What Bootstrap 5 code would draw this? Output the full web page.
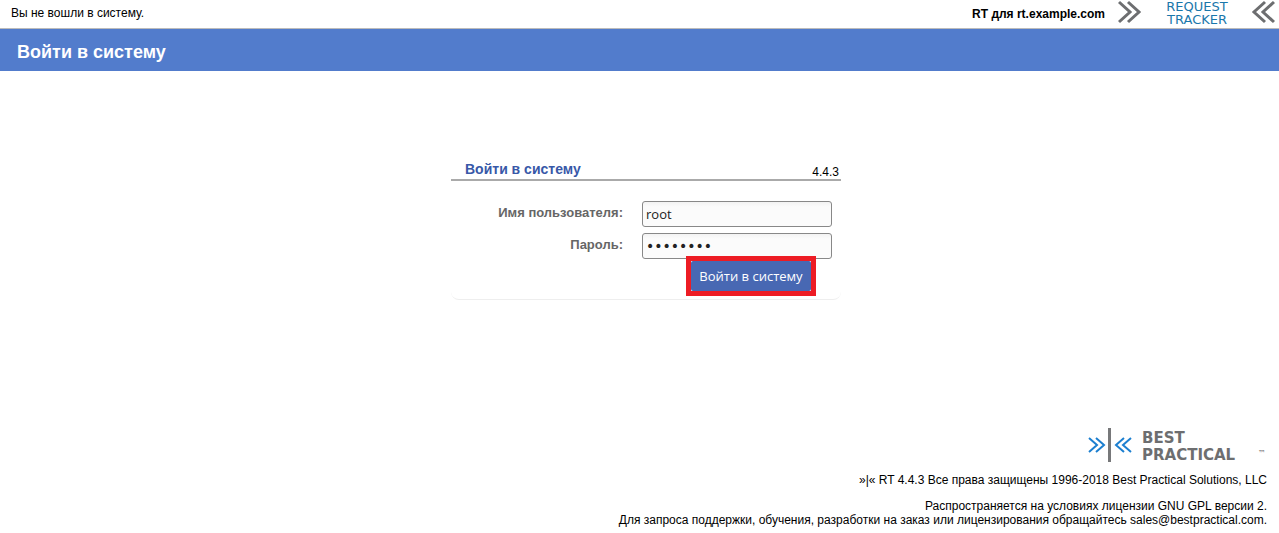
<!DOCTYPE html>
<html lang="ru">
<head>
<meta charset="utf-8">
<meta name="viewport" content="width=device-width, initial-scale=1">
<title>Войти в систему</title>
<link rel="stylesheet" href="https://cdn.jsdelivr.net/npm/bootstrap@5.3.0/dist/css/bootstrap.min.css">
<style>
  body { font-family: "Liberation Sans", Arial, sans-serif; font-size: 12px; line-height: 14px; color: #000; background: #fff; }
  .topbar { height: 29px; border-bottom: 1px solid #bbb; padding: 0 4px 0 11px; }
  .topbar-text { padding-top: 6px; }
  .site-name { margin-right: 13px; padding-top: 7px; }
  .page-title { height: 42px; padding: 4px 17px 0; background: #527ccc; color: #fff; }
  .page-title h1 { font-size: 18px; line-height: 24px; }
  .login-area { padding: 88px 0 0 13px; }
  .login-box { width: 390px; max-width: 100%; height: 141px; border-bottom: 1px solid #eee; border-radius: 0 0 8px 8px; }
  .login-head { height: 22px; border-bottom: 2px solid #aaa; padding: 2px 2px 0 14px; }
  .login-head h2 { font-size: 14px; line-height: 17px; color: #3858a8; }
  .login-head span { padding-top: 4px; }
  .fields { padding: 20px 9px 0 0; gap: 6px; }
  .field-row { gap: 19px; }
  .field-row label { font-size: 13px; line-height: 24px; color: #666; font-weight: bold; }
  .login-box .entry { width: 190px; height: 26px; padding: 0 3px; border: 1px solid #888; border-radius: 3px; background: linear-gradient(#f3f3f3, #fbfbfb 5px); font-family: "Open Sans", sans-serif; font-size: 13px; color: #222; }
  .login-box .entry[type="password"] { font-family: "DejaVu Sans", sans-serif; font-size: 14px; }
  .submit-row { padding: 2px 30px 0 0; }
  .marked { outline: 5px solid #ed1c24; background: #fff; position: relative; }
  .login-btn { width: 120px; height: 30px; padding: 1px 0 0; border: 0; border-radius: 2px; background: #4868b3; color: #fff; font-family: "Open Sans", sans-serif; font-size: 13px; }
  .login-btn:hover { background: #3d5ca6; color: #fff; }
  .page-foot { padding: 128px 12px 6px; }
  .page-foot a { color: inherit; text-decoration: none; }
  .page-foot svg { overflow: visible; }
  .wordmark { font-family: "DejaVu Sans", sans-serif; }
</style>
</head>
<body>
<header>
  <div class="topbar d-flex justify-content-between align-items-start">
    <span class="topbar-text">Вы не вошли в систему.</span>
    <div class="d-flex align-items-start">
      <strong class="site-name">RT для rt.example.com</strong>
      <svg width="157" height="28" viewBox="0 0 157 28" role="img" aria-label="Request Tracker">
        <g fill="none" stroke="#6d6e70" stroke-width="3">
          <path d="M1 2 12 12 1 22M10 2 21 12 10 22M147 2 136 12 147 22M156 2 145 12 156 22"/>
        </g>
        <g class="wordmark" fill="#1a77ab" font-size="13" text-anchor="middle">
          <text x="79" y="11">REQUEST</text>
          <text x="79" y="24">TRACKER</text>
        </g>
      </svg>
    </div>
  </div>
  <div class="page-title d-flex align-items-center"><h1 class="fw-bold m-0">Войти в систему</h1></div>
</header>

<main class="login-area d-flex justify-content-center">
  <form class="login-box" onsubmit="return false">
    <div class="login-head d-flex justify-content-between align-items-start">
      <h2 class="fw-bold m-0">Войти в систему</h2>
      <span>4.4.3</span>
    </div>
    <div class="fields d-flex flex-column">
      <div class="field-row d-flex justify-content-end">
        <label for="user">Имя пользователя:</label>
        <input class="entry form-control" id="user" type="text" value="root">
      </div>
      <div class="field-row d-flex justify-content-end">
        <label for="pass">Пароль:</label>
        <input class="entry form-control" id="pass" type="password" value="password">
      </div>
    </div>
    <div class="submit-row d-flex justify-content-end">
      <div class="marked d-flex"><button class="btn login-btn" type="submit">Войти в систему</button></div>
    </div>
  </form>
</main>

<footer class="page-foot text-end">
  <a href="#" class="d-inline-block" aria-label="Best Practical">
    <svg class="d-block" width="179" height="34" viewBox="0 0 179 34">
      <g fill="none" stroke="#1c7fd0" stroke-width="2">
        <path d="M1 10 9 17 1 24M8 10 16 17 8 24M36 10 28 17 36 24M43 10 35 17 43 24"/>
      </g>
      <path d="M21.500 0V34" stroke="#77787a" stroke-width="3"/>
      <g class="wordmark" fill="#6d6e70" font-size="15" font-weight="bold">
        <text x="54" y="15">BEST</text>
        <text x="54" y="32">PRACTICAL</text>
        <text x="170" y="28" font-size="8" font-weight="normal">™</text>
      </g>
    </svg>
  </a>
  <p class="m-0 pt-2">»|« RT 4.4.3 Все права защищены 1996-2018 Best Practical Solutions, LLC</p>
  <p class="m-0 pt-2 mt-1">Распространяется на условиях лицензии GNU GPL версии 2.<br>Для запроса поддержки, обучения, разработки на заказ или лицензирования обращайтесь <a href="mailto:sales@bestpractical.com">sales@bestpractical.com</a>.</p>
</footer>
<script src="https://cdn.jsdelivr.net/npm/bootstrap@5.3.0/dist/js/bootstrap.bundle.min.js"></script>
</body>
</html>
